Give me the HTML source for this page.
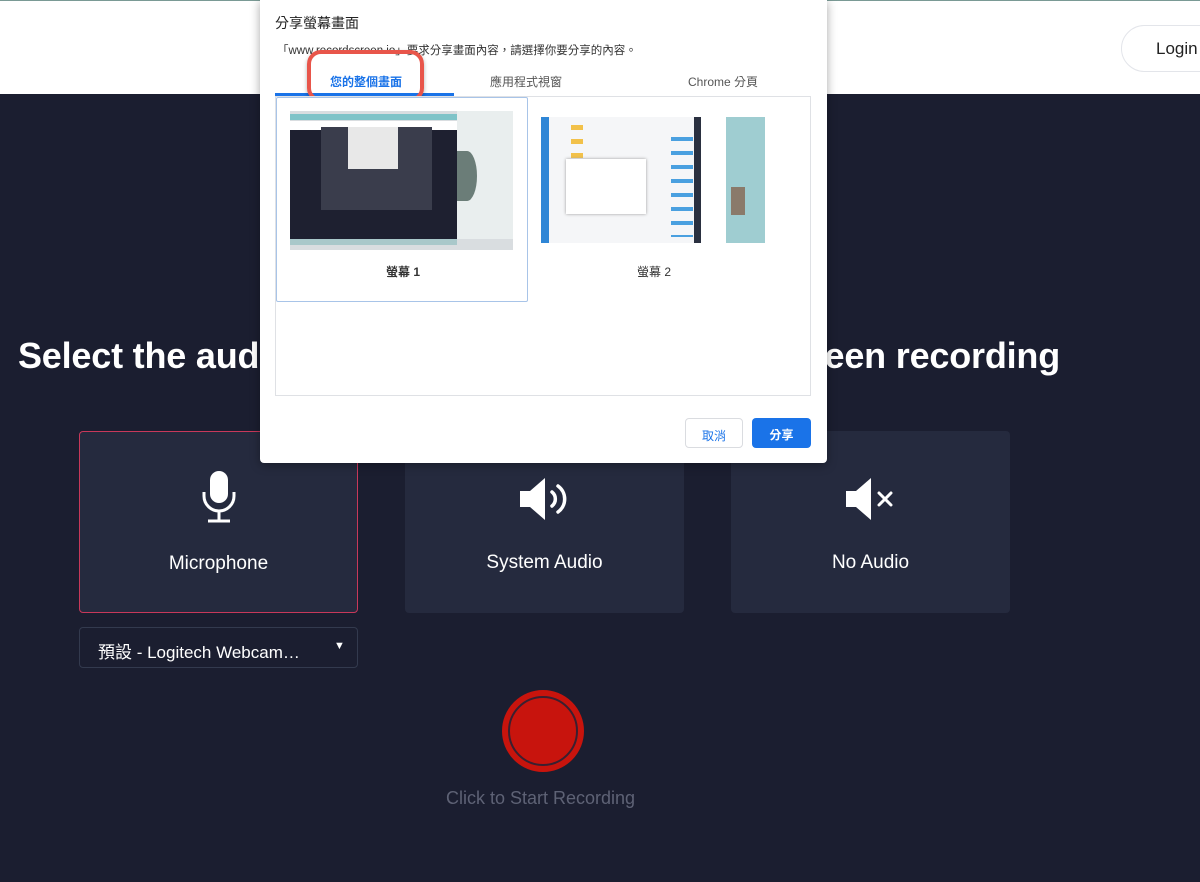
<!DOCTYPE html>
<html><head><meta charset="utf-8"><style>
*{margin:0;padding:0;box-sizing:border-box}
body{width:1200px;height:882px;overflow:hidden;background:#1b1e30;font-family:"Liberation Sans","Noto Sans CJK TC",sans-serif;position:relative}
.hdr{position:absolute;left:0;top:0;width:1200px;height:94px;background:#fff;border-top:1px solid #7a9a95}
.login{position:absolute;left:1121px;top:24px;width:120px;height:47px;border:1px solid #e3e5ea;border-radius:24px;font-size:17px;color:#222;padding:13px 0 0 34px}
h1{position:absolute;left:18px;top:335px;font-size:36px;font-weight:bold;color:#fff;white-space:nowrap;letter-spacing:-0.2px}
.card{position:absolute;top:431px;width:279px;height:182px;background:#252a3e;border-radius:4px;color:#fff;font-size:19px;text-align:center}
.card .lbl{position:absolute;top:121px;left:0;right:0}
.card svg{position:absolute;left:50%;top:38px;transform:translateX(-50%)}
.sel{position:absolute;left:79px;top:627px;width:279px;height:41px;border:1px solid #333a4e;border-radius:4px;color:#fff;font-size:17px;padding:10px 0 0 18px}
.rec{position:absolute;left:502px;top:690px;width:82px;height:82px;border-radius:50%;background:#c8140d;border:3px solid #c8140d}
.rec i{position:absolute;left:3px;top:3px;right:3px;bottom:3px;border-radius:50%;border:2px solid #3a2030;background:#c8140d}
.cts{position:absolute;left:446px;top:788px;font-size:18px;color:#5e6275}
.dlg{position:absolute;left:260px;top:0;width:567px;height:463px;background:#fff;box-shadow:0 2px 10px rgba(0,0,0,.35);border-radius:0 0 4px 4px}
.t{position:absolute;font-size:12px;color:#333}
.box{position:absolute;left:15px;top:96px;width:536px;height:300px;border:1px solid #dfe1e5}
.btn{position:absolute;top:418px;height:30px;border-radius:4px;font-size:12px;text-align:center;padding-top:8px;font-weight:bold}
</style></head><body>
<div class="hdr"><div class="login">Login</div></div>
<h1>Select the audio you want to include in your screen recording</h1>

<div class="card" style="left:79px;border:1px solid #c8385a">
<svg width="40" height="54" viewBox="0 0 40 54"><rect x="11" y="1" width="18" height="32" rx="9" fill="#fff"/><path d="M5 22v4a15 15 0 0 0 30 0v-4" fill="none" stroke="#fff" stroke-width="3"/><path d="M20 41v10M9 51h22" stroke="#fff" stroke-width="3"/></svg>
<div class="lbl">Microphone</div></div>
<div class="card" style="left:405px">
<svg width="54" height="44" viewBox="0 0 54 44" style="top:46px"><path d="M2 14h10L27 1v42L12 30H2z" fill="#fff"/><path d="M34 15a9 9 0 0 1 0 14M40 9a16 16 0 0 1 0 26" fill="none" stroke="#fff" stroke-width="3.5" stroke-linecap="round"/></svg>
<div class="lbl">System Audio</div></div>
<div class="card" style="left:731px">
<svg width="54" height="44" viewBox="0 0 54 44" style="top:46px"><path d="M2 14h10L27 1v42L12 30H2z" fill="#fff"/><path d="M35 16l12 12M47 16L35 28" stroke="#fff" stroke-width="3" stroke-linecap="round"/></svg>
<div class="lbl">No Audio</div></div>
<div class="sel">預設 - Logitech Webcam…<span style="position:absolute;left:254px;top:12px;font-size:11px">▼</span></div>
<div class="rec"><i></i></div>
<div class="cts">Click to Start Recording</div>

<div class="dlg">
<div class="t" style="left:15px;top:13px;font-size:14px;color:#222">分享螢幕畫面</div>
<div class="t" style="left:17px;top:42px;font-size:11.5px">「www.recordscreen.io」要求分享畫面內容，請選擇你要分享的內容。</div>
<div class="t" style="left:70px;top:73px;color:#1a73e8;font-weight:bold">您的整個畫面</div>
<div class="t" style="left:230px;top:73px;color:#555">應用程式視窗</div>
<div class="t" style="left:428px;top:73px;color:#555">Chrome 分頁</div>
<div style="position:absolute;left:15px;top:93px;width:179px;height:3px;background:#1a73e8"></div>
<div style="position:absolute;left:47px;top:50px;width:117px;height:52px;border:4px solid #e8554a;border-radius:14px;box-shadow:0 2px 4px rgba(0,0,0,.3)"></div>
<div class="box"></div>
<div style="position:absolute;left:16px;top:97px;width:252px;height:205px;border:1px solid #a8c4e8;border-radius:2px;background:#fff"></div>
<div style="position:absolute;left:30px;top:111px;width:223px;height:139px;background:#d9dde0">
 <div style="position:absolute;left:0;top:3px;width:167px;height:6px;background:#7fc3c8"></div>
 <div style="position:absolute;left:0;top:10px;width:167px;height:9px;background:#fff"></div>
 <div style="position:absolute;left:0;top:19px;width:167px;height:109px;background:#1e2030"></div>
 <div style="position:absolute;left:31px;top:16px;width:111px;height:83px;background:#3a3d4c"></div>
 <div style="position:absolute;left:58px;top:16px;width:50px;height:42px;background:#e8e8e8"></div>
 <div style="position:absolute;left:167px;top:0;width:56px;height:128px;background:#e9eeee"></div>
 <div style="position:absolute;left:167px;top:40px;width:20px;height:50px;background:#6b7d78;border-radius:0 50% 50% 0"></div>
 <div style="position:absolute;left:0;top:128px;width:167px;height:6px;background:#a9c8ca"></div>
</div>
<div class="t" style="left:126px;top:263px;font-weight:bold">螢幕 1</div>
<div style="position:absolute;left:281px;top:117px;width:224px;height:126px;background:#f5f6f8">
 <div style="position:absolute;left:0;top:0;width:8px;height:126px;background:#2f86d6"></div>
 <div style="position:absolute;left:30px;top:8px;width:12px;height:90px;background:repeating-linear-gradient(#f2c14a 0 5px,transparent 5px 14px)"></div>
 <div style="position:absolute;left:25px;top:42px;width:80px;height:55px;background:#fff;box-shadow:0 0 3px #999"></div>
 <div style="position:absolute;left:130px;top:10px;width:22px;height:110px;background:repeating-linear-gradient(transparent 0 10px,#4aa0e0 10px 14px)"></div>
 <div style="position:absolute;left:153px;top:0;width:7px;height:126px;background:#2a3040"></div>
 <div style="position:absolute;left:160px;top:0;width:25px;height:126px;background:#fff"></div>
 <div style="position:absolute;left:185px;top:0;width:39px;height:126px;background:#9fcdd1"></div>
 <div style="position:absolute;left:190px;top:70px;width:14px;height:28px;background:#8a7a6a"></div>
</div>
<div class="t" style="left:377px;top:263px">螢幕 2</div>
<div class="btn" style="left:425px;width:58px;border:1px solid #dadce0;color:#1a73e8;font-weight:normal">取消</div>
<div class="btn" style="left:492px;width:59px;background:#1a73e8;color:#fff">分享</div>
</div>
</body></html>
